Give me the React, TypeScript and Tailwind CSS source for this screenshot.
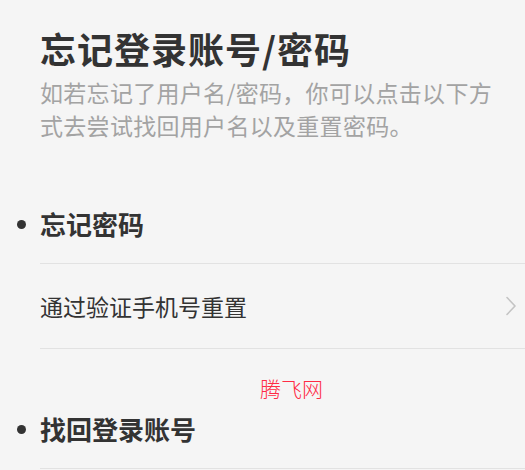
const font = { fontFamily: '"Noto Sans CJK SC", "Noto Sans", sans-serif' };

function Chevron() {
  return (
    <svg width="12" height="20" viewBox="0 0 12 20" fill="none" className="shrink-0">
      <path d="M2 1.5 L10 10 L2 18.5" stroke="#c4c4c4" strokeWidth="1.6" strokeLinecap="round" strokeLinejoin="round" />
    </svg>
  );
}

function SectionHeading({ children }: { children: string }) {
  return (
    <div className="flex items-center -ml-[23px] gap-[14px] h-[36px]">
      <span className="w-[9px] h-[9px] rounded-full bg-[#333333] shrink-0" />
      <span className="text-[26px] leading-[36px] font-bold text-[#333333]">{children}</span>
    </div>
  );
}

export default function App() {
  return (
    <div className="relative w-[525px] h-[470px] overflow-hidden bg-[#f5f5f5]" style={font}>
      <div className="pl-[40px] pt-[26px]">
        <h1 className="text-[36px] leading-[44px] font-bold text-[#333333] tracking-[1px]">
          忘记登录账号/密码
        </h1>
        <p className="mt-[6px] pr-[20px] text-[23px] leading-[33px] tracking-[0.3px] text-[#a3a3a3]">
          如若忘记了用户名/密码，你可以点击以下方式去尝试找回用户名以及重置密码。
        </p>

        <div className="mt-[64px]">
          <SectionHeading>忘记密码</SectionHeading>
          <div className="mt-[21px] border-t border-[#e2e2e2]">
            <button className="w-full h-[85px] flex items-center justify-between pr-[8px] border-b border-[#e2e2e2] text-left">
              <span className="text-[23px] text-[#333333]">通过验证手机号重置</span>
              <Chevron />
            </button>
          </div>
        </div>

        <div className="mt-[62px]">
          <SectionHeading>找回登录账号</SectionHeading>
          <div className="mt-[21px] border-t border-[#e2e2e2]" />
        </div>
      </div>

      <span
        className="absolute left-[260px] top-[374px] text-[21px] leading-[28px] text-[#ff2b45]"
        style={{ fontFamily: '"Noto Sans CJK SC", sans-serif', fontWeight: 300 }}
      >
        腾飞网
      </span>
    </div>
  );
}
